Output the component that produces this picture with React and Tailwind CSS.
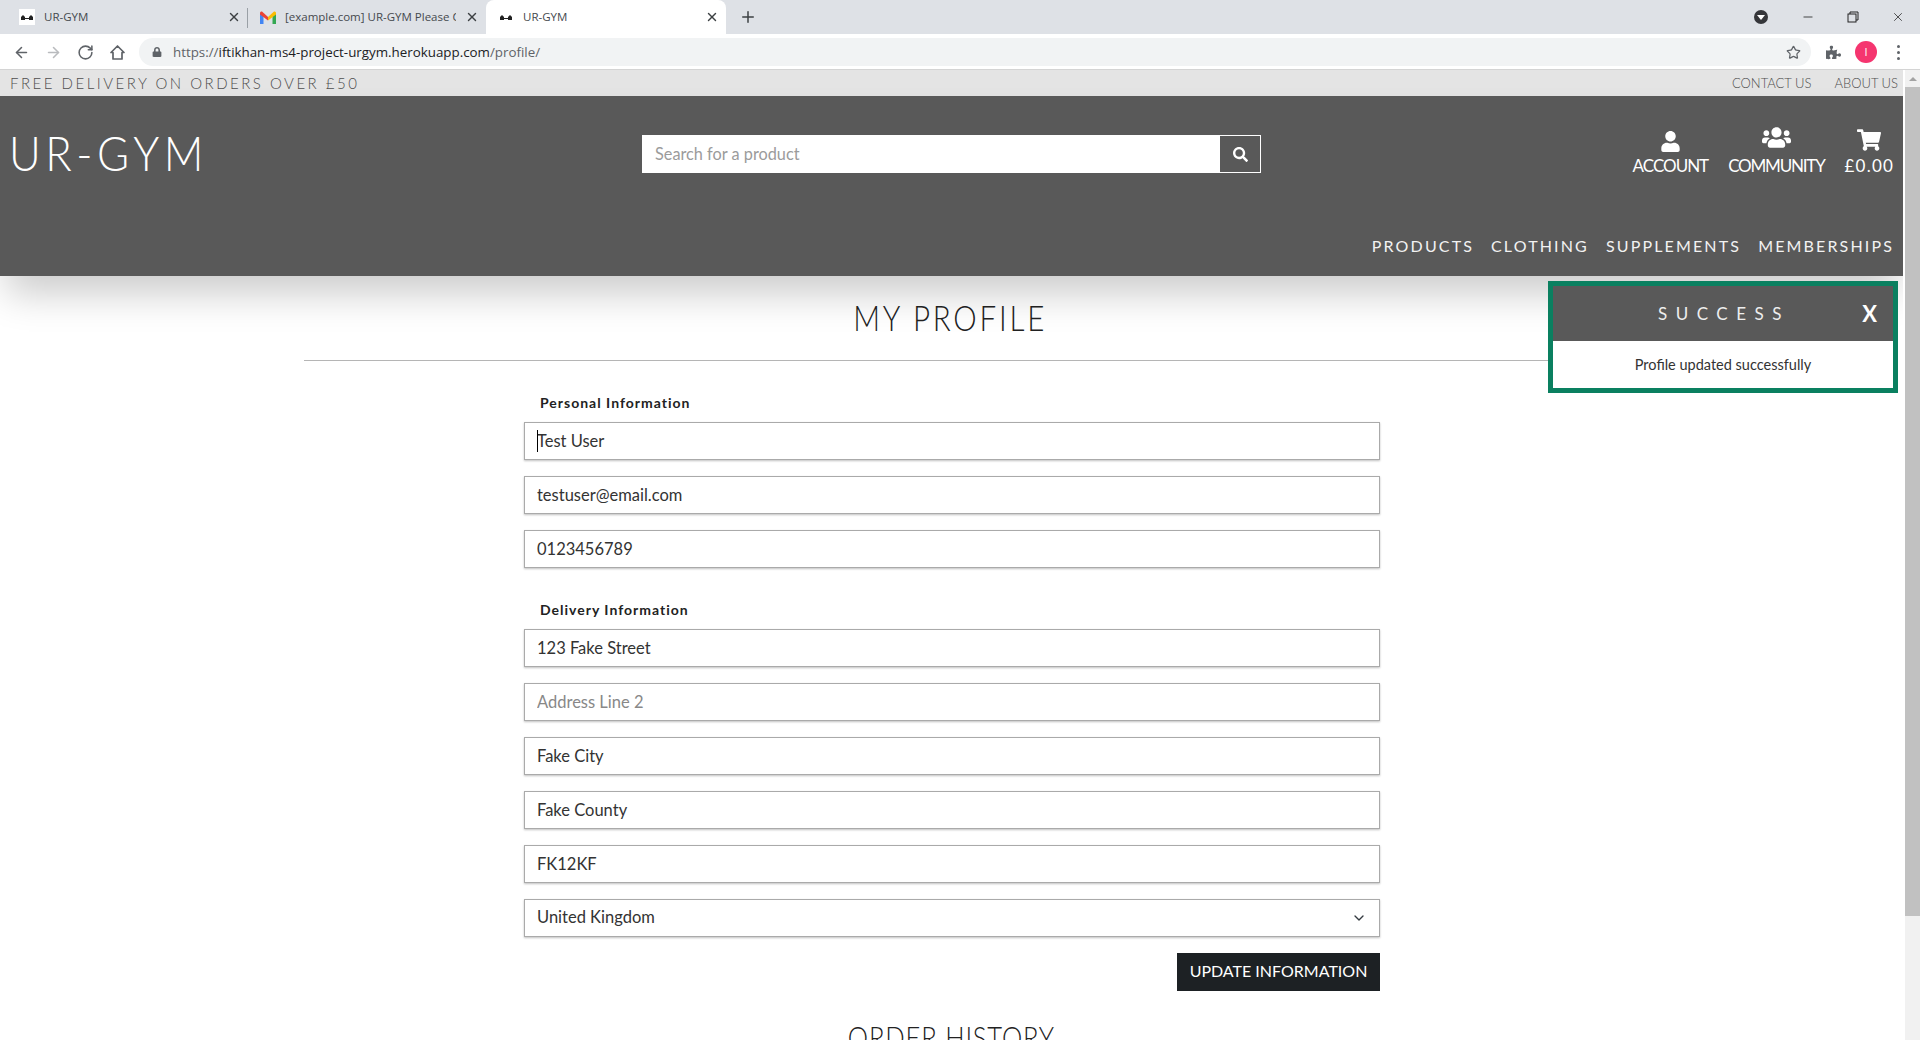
import { ArrowLeft, ArrowRight, RotateCw, Star, Plus, X, Minus, ChevronDown } from 'lucide-react'
import { FaUser, FaUsers, FaShoppingCart, FaSearch, FaPuzzlePiece, FaLock } from 'react-icons/fa'

const bodyFont = "font-['Lato','Noto_Sans',sans-serif]"
const brandFont = "font-['Lato','Liberation_Sans',sans-serif]"

function Favicon() {
  return (
    <span className="w-4 h-4 bg-white flex items-center justify-center shrink-0">
      <svg width="14" height="8" viewBox="0 0 14 8" fill="#222">
        <path d="M1 7 L1 4 L3 2 L5 4 L5 7 Z M9 7 L9 4 L11 2 L13 4 L13 7 Z M5 5 H9 V6 H5 Z" />
      </svg>
    </span>
  )
}

function GmailIcon() {
  return (
    <svg width="16" height="13" viewBox="0 0 16 13" className="shrink-0">
      <path d="M0 2 L0 13 L3.5 13 L3.5 5 Z" fill="#4285f4" />
      <path d="M16 2 L16 13 L12.5 13 L12.5 5 Z" fill="#34a853" />
      <path d="M0 2 Q0 0 2 0.5 L8 6 L8 9.5 L0 3.5 Z" fill="#ea4335" />
      <path d="M16 2 Q16 0 14 0.5 L8 6 L8 9.5 L16 3.5 Z" fill="#fbbc04" />
    </svg>
  )
}

function Tab({ icon, title, active, divider, size }) {
  return (
    <div className={`relative flex items-center h-[34px] ${size} pr-[7px] gap-[9px] text-[11.5px] ${active ? 'bg-white rounded-t-lg' : ''}`}>
      {icon}
      <span className="flex-1 overflow-hidden whitespace-nowrap text-[#45494e]">{title}</span>
      <X size={14} strokeWidth={2.4} className="text-[#3c4043] shrink-0" />
      {divider && <span className="absolute right-0 top-[8px] h-[20px] w-px bg-[#9aa0a6]" />}
    </div>
  )
}

function BrowserChrome() {
  return (
    <div className="font-['Open_Sans',sans-serif] shrink-0">
      <div className="h-[34px] bg-[#dee1e6] flex items-center">
        <Tab icon={<Favicon />} title="UR-GYM" divider size="w-[248px] pl-[19px]" />
        <Tab icon={<GmailIcon />} title="[example.com] UR-GYM Please Co" size="w-[238px] pl-[12px]" />
        <Tab icon={<Favicon />} title="UR-GYM" active size="w-[240px] pl-[12px]" />
        <Plus size={18} strokeWidth={2} className="ml-[13px] text-[#3c4043]" />
        <div className="flex-1" />
        <span className="w-[14px] h-[14px] rounded-full bg-[#35363a] flex items-center justify-center mr-[33px]">
          <span className="w-0 h-0 border-l-[4px] border-r-[4px] border-t-[5px] border-l-transparent border-r-transparent border-t-white" />
        </span>
        <div className="flex items-center gap-[32px] pr-[15px] text-[#222]">
          <Minus size={14} strokeWidth={1.4} />
          <svg width="12" height="12" viewBox="0 0 12 12" fill="none" stroke="#222">
            <rect x="1" y="3" width="8" height="8" />
            <path d="M3 3 V1 H11 V9 H9" />
          </svg>
          <X size={14} strokeWidth={1.3} />
        </div>
      </div>
      <div className="h-[36px] bg-white border-b border-[#d4d4d4] flex items-center pl-[13px] pt-[1px]">
        <div className="flex items-center gap-[15px] text-[#5f6368]">
          <ArrowLeft size={17} strokeWidth={2.2} />
          <ArrowRight size={17} strokeWidth={2.2} className="text-[#b9bbbe]" />
          <RotateCw size={17} strokeWidth={2.2} />
          <svg width="17" height="17" viewBox="0 0 17 17" fill="none" stroke="#5f6368" strokeWidth="1.7">
            <path d="M8.5 2 L15 8.5 H13 V15 H4 V8.5 H2 Z" strokeLinejoin="round" />
          </svg>
        </div>
        <div className="ml-[13px] w-[1672px] h-[28px] rounded-full bg-[#f1f3f4] flex items-center pl-[13px] pr-[10px] text-[13.35px]">
          <FaLock size={10} className="text-[#5f6368]" />
          <span className="ml-[11px] flex-1 text-[#5f6368]">
            https://<span className="text-[#202124]">iftikhan-ms4-project-urgym.herokuapp.com</span>/profile/
          </span>
          <Star size={15} strokeWidth={2} className="text-[#5f6368]" />
        </div>
        <FaPuzzlePiece size={15} className="ml-[15px] text-[#5f6368]" />
        <span className="ml-[14px] w-[22px] h-[22px] rounded-full bg-[#f5356f] text-white text-[11px] flex items-center justify-center">I</span>
        <div className="ml-[20px] flex flex-col gap-[3px]">
          <span className="w-[3px] h-[3px] rounded-full bg-[#5f6368]" />
          <span className="w-[3px] h-[3px] rounded-full bg-[#5f6368]" />
          <span className="w-[3px] h-[3px] rounded-full bg-[#5f6368]" />
        </div>
      </div>
    </div>
  )
}

function HeaderLink({ icon, label, tracking }) {
  return (
    <div className="flex flex-col items-center text-white">
      <div className="h-[25px] flex items-end">{icon}</div>
      <span className={`text-[17px] leading-[24px] font-normal mt-[2px] ${tracking}`}>{label}</span>
    </div>
  )
}

function Header() {
  const nav = ['PRODUCTS', 'CLOTHING', 'SUPPLEMENTS', 'MEMBERSHIPS']
  return (
    <header className={`relative z-10 shrink-0 ${brandFont}`}>
      <div className="h-[26px] pt-[1px] bg-[#e4e4e4] flex items-center justify-between pl-[10px] pr-[5px] text-[#4f4f4f]">
        <span className="text-[15px] tracking-[2.5px] font-light">FREE DELIVERY ON ORDERS OVER £50</span>
        <div className="flex gap-[23px] text-[13px] font-light">
          <span>CONTACT US</span>
          <span>ABOUT US</span>
        </div>
      </div>
      <div className="h-[180px] bg-[#595959] shadow-[0_24px_36px_-6px_rgba(0,0,0,0.2)] flex flex-col pl-[9px] pr-[9px]">
        <div className="h-[120px] flex items-start">
          <div className="w-[633px] pt-[27px]">
            <span className="inline-block origin-left scale-x-[0.91] text-[48px] leading-[60px] font-light tracking-[5px] text-white">UR-GYM</span>
          </div>
          <div className="mt-[39px] w-[619px] h-[38px] bg-white flex items-center">
            <input readOnly placeholder="Search for a product" className={`flex-1 pl-[13px] text-[16.3px] outline-none placeholder:text-[#9b9b9b] ${bodyFont}`} />
            <div className="w-[40px] h-[36px] mr-px bg-[#595959] flex items-center justify-center text-white">
              <FaSearch size={15} />
            </div>
          </div>
          <div className="flex-1 flex justify-end gap-[20px] pt-[31px]">
            <HeaderLink icon={<FaUser size={21} />} label="ACCOUNT" tracking="tracking-[-1px]" />
            <HeaderLink icon={<FaUsers size={29} />} label="COMMUNITY" tracking="tracking-[-1.2px]" />
            <HeaderLink icon={<FaShoppingCart size={24} />} label="£0.00" tracking="tracking-[1.2px]" />
          </div>
        </div>
        <nav className="flex justify-end gap-[17px] pt-[17px] text-[16px] leading-[26px] tracking-[2.15px] text-[#f2f2f2]">
          {nav.map((n) => <span key={n}>{n}</span>)}
        </nav>
      </div>
    </header>
  )
}

function Toast() {
  return (
    <div className={`absolute z-20 left-[1548px] top-[5px] w-[350px] border-[5px] border-[#0a8060] bg-white ${bodyFont}`}>
      <div className={`relative h-[55px] bg-[#595959] flex items-center justify-center text-[#eeeeee] ${brandFont}`}>
        <span className="text-[17px] tracking-[8.5px] pl-[2px]">SUCCESS</span>
        <span className="absolute right-[16px] text-white text-[22px] font-bold">X</span>
      </div>
      <div className="h-[47px] flex items-center justify-center text-[14.5px] text-[#333]">Profile updated successfully</div>
    </div>
  )
}

function Field({ value, placeholder }) {
  return (
    <input
      readOnly
      defaultValue={value}
      placeholder={placeholder}
      className="w-full h-[38px] px-[12px] pb-[1px] border border-[#aaaaaa] shadow-[0_1px_2px_rgba(0,0,0,0.25)] text-[16.5px] text-[#333] outline-none placeholder:text-[#888]"
    />
  )
}

function Section({ title, children }) {
  return (
    <section className="pt-[32px]">
      <h3 className="h-[20px] mb-[9px] pl-[16px] text-[14px] leading-[20px] font-bold tracking-[1px] text-[#222]">{title}</h3>
      <div className="flex flex-col gap-[16px]">{children}</div>
    </section>
  )
}

function ProfileForm() {
  return (
    <div className={`relative w-[856px] ml-[524px] ${bodyFont}`}>
      <span className="absolute left-[13px] top-[69px] w-px h-[22px] bg-black" />
      <Section title="Personal Information">
        <Field value="Test User" />
        <Field value="testuser@email.com" />
        <Field value="0123456789" />
      </Section>
      <Section title="Delivery Information">
        <Field value="123 Fake Street" />
        <Field placeholder="Address Line 2" />
        <Field value="Fake City" />
        <Field value="Fake County" />
        <Field value="FK12KF" />
        <div className="h-[38px] px-[12px] pb-[1px] border border-[#aaaaaa] shadow-[0_1px_2px_rgba(0,0,0,0.25)] text-[16.5px] text-[#333] flex items-center justify-between">
          <span>United Kingdom</span>
          <ChevronDown size={16} strokeWidth={2} className="text-[#343a40]" />
        </div>
      </Section>
      <div className="flex justify-end mt-[16px]">
        <button type="button" className="w-[203px] h-[38px] pb-[2px] bg-[#1d2124] text-white text-[16px]">UPDATE INFORMATION</button>
      </div>
    </div>
  )
}

export default function App() {
  return (
    <div className="h-[1040px] w-[1920px] overflow-hidden bg-white flex flex-col">
      <BrowserChrome />
      <div className="flex-1 flex min-h-0">
        <div className="w-[1903px] flex flex-col overflow-hidden">
          <Header />
          <main className="relative flex-1">
            <Toast />
            <div className={`w-[1292px] h-[85px] pb-[2px] ml-[304px] border-b border-[#b5b5b5] flex items-center justify-center text-[#222] ${brandFont}`}>
              <span className="inline-block scale-x-[0.82] text-[36px] font-light tracking-[3.4px]">MY PROFILE</span>
            </div>
            <ProfileForm />
            <h2 className={`mt-[26px] flex justify-center text-[#222] ${brandFont}`}>
              <span className="inline-block scale-x-[0.8] text-[32px] leading-[40px] font-light tracking-[1px]">ORDER HISTORY</span>
            </h2>
          </main>
        </div>
        <div className="w-[17px] bg-[#f1f1f1] flex flex-col items-center shrink-0 border-l-2 border-white">
          <span className="mt-[7px] w-0 h-0 border-l-[4px] border-r-[4px] border-b-[4px] border-l-transparent border-r-transparent border-b-[#a3a3a3]" />
          <span className="mt-[6px] w-full h-[829px] bg-[#c1c1c1]" />
        </div>
      </div>
    </div>
  )
}
